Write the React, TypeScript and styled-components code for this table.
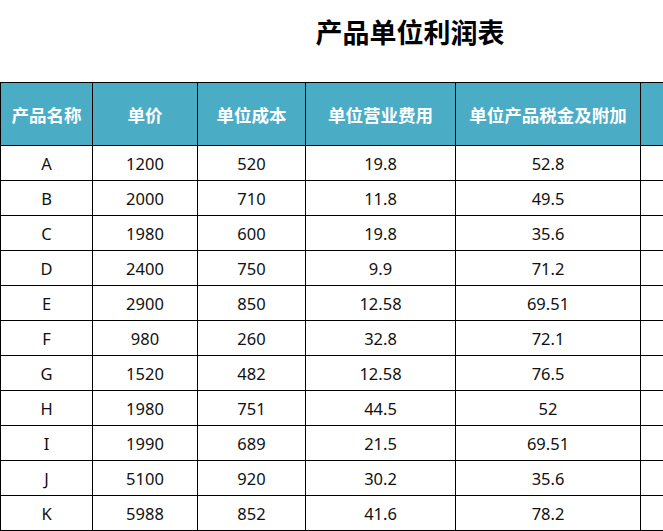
import React from 'react'
import styled, { createGlobalStyle } from 'styled-components'

const GlobalStyle = createGlobalStyle`
    html, body {
        margin: 0;
        padding: 0;
        background: #ffffff;
        overflow: hidden;
    }
`

const Sheet = styled.div`
    width: 820px;
    font-family: 'Noto Sans', 'Noto Sans CJK SC', sans-serif;
    color: #111111;
`

const Title = styled.h1`
    margin: 0;
    height: 82px;
    padding-top: 13px;
    box-sizing: border-box;
    text-align: center;
    font-family: 'Noto Sans CJK SC', sans-serif;
    font-size: 27px;
    font-weight: 700;
    line-height: 38px;
    color: #000000;
`

const Table = styled.table`
    border-collapse: collapse;
    table-layout: fixed;
    width: 820px;
`

const HeadCell = styled.th<{ $width: number }>`
    width: ${(p) => p.$width}px;
    height: 62px;
    padding: 0;
    background-color: #4bacc6;
    border: 1px solid #000000;
    color: #ffffff;
    font-family: 'Noto Sans CJK SC', sans-serif;
    font-size: 17.5px;
    font-weight: 700;
    text-align: center;
    white-space: nowrap;
`

const Cell = styled.td`
    height: 34px;
    padding: 0;
    border: 1px solid #000000;
    font-size: 16.5px;
    text-align: center;
    white-space: nowrap;
`

const columns = [
    { title: '产品名称', width: 91 },
    { title: '单价', width: 104 },
    { title: '单位成本', width: 107 },
    { title: '单位营业费用', width: 149 },
    { title: '单位产品税金及附加', width: 184 },
    { title: '', width: 184 }
]

const rows: (string | number)[][] = [
    ['A', 1200, 520, 19.8, 52.8],
    ['B', 2000, 710, 11.8, 49.5],
    ['C', 1980, 600, 19.8, 35.6],
    ['D', 2400, 750, 9.9, 71.2],
    ['E', 2900, 850, 12.58, 69.51],
    ['F', 980, 260, 32.8, 72.1],
    ['G', 1520, 482, 12.58, 76.5],
    ['H', 1980, 751, 44.5, 52],
    ['I', 1990, 689, 21.5, 69.51],
    ['J', 5100, 920, 30.2, 35.6],
    ['K', 5988, 852, 41.6, 78.2]
]

const App: React.FC = () => {
    return (
        <>
            <GlobalStyle />
            <Sheet>
                <Title>产品单位利润表</Title>
                <Table>
                    <thead>
                        <tr>
                            {columns.map((col, index) => (
                                <HeadCell key={index} $width={col.width}>
                                    {col.title}
                                </HeadCell>
                            ))}
                        </tr>
                    </thead>
                    <tbody>
                        {rows.map((row) => (
                            <tr key={row[0]}>
                                {row.map((value, index) => (
                                    <Cell key={index}>{value}</Cell>
                                ))}
                                <Cell></Cell>
                            </tr>
                        ))}
                    </tbody>
                </Table>
            </Sheet>
        </>
    )
}

export default App
